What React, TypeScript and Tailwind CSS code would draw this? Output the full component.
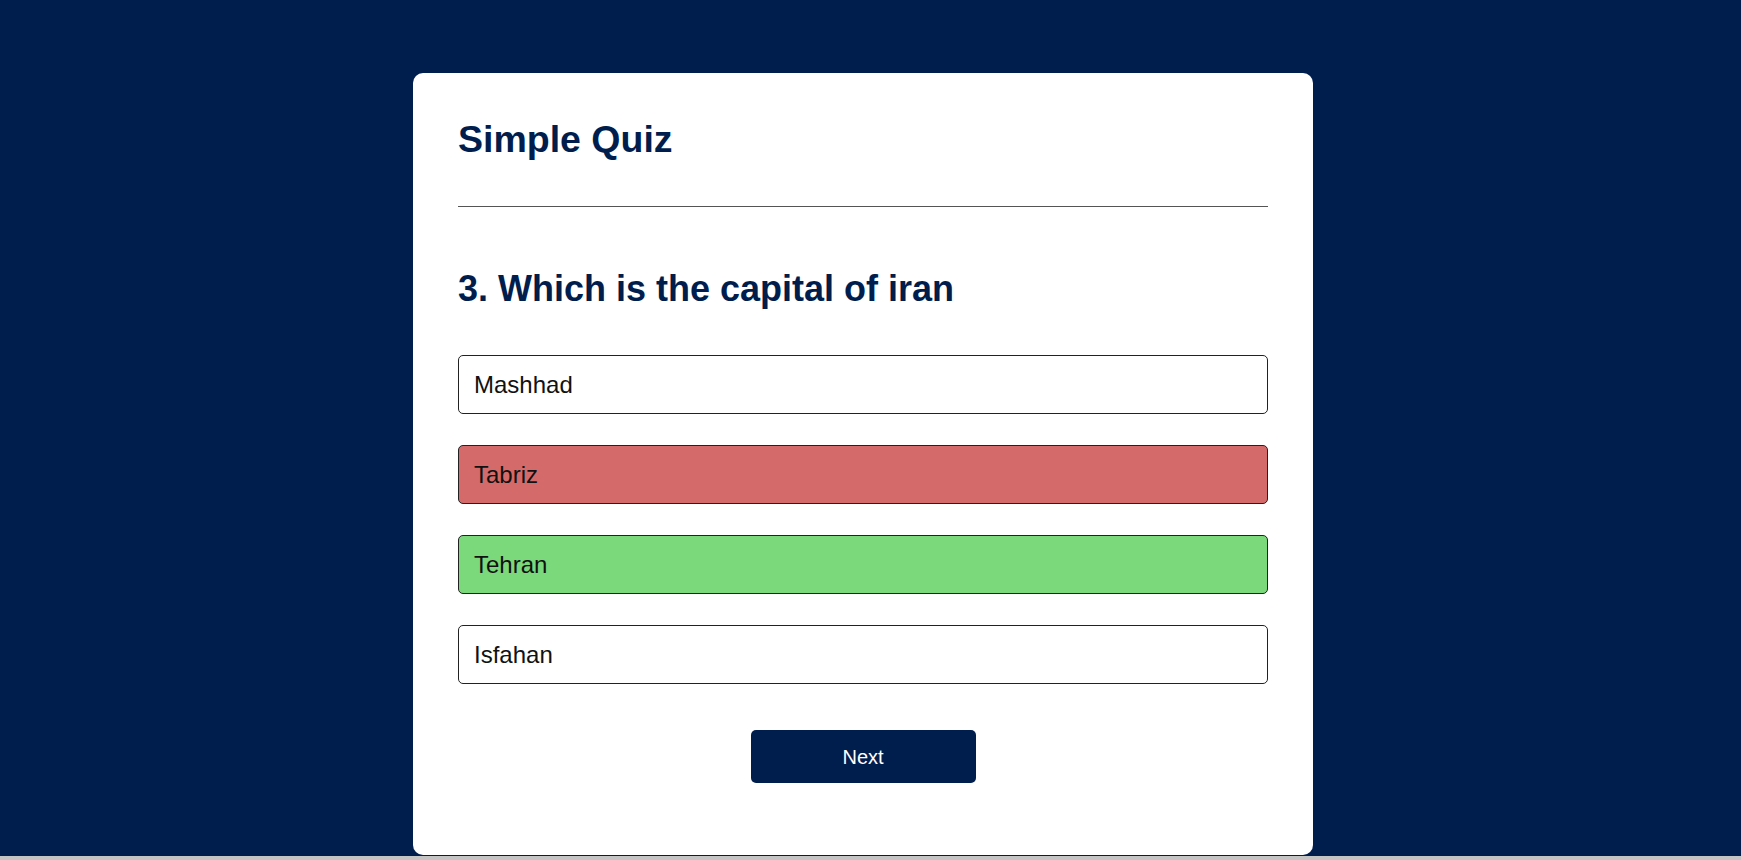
import React from "react";

const options = [
  { label: "Mashhad", cls: "bg-white" },
  { label: "Tabriz", cls: "bg-[#d46a6a]" },
  { label: "Tehran", cls: "bg-[#7bd87b]" },
  { label: "Isfahan", cls: "bg-white" },
];

export default function App() {
  return (
    <div
      className="h-[860px] flex flex-col bg-[#001e4d] overflow-hidden"
      style={{ fontFamily: '"Liberation Sans", Arial, sans-serif' }}
    >
      <div className="flex-1 flex justify-center pr-[15px] pt-[73px]">
        <div className="w-[900px] h-[782px] bg-white rounded-[10px] px-[45px] pt-[45px] flex flex-col">
          <h1 className="text-[37.5px] leading-[42px] font-bold text-[#001e4d]">Simple Quiz</h1>
          <div className="mt-[46px] border-t border-[#555]" />
          <h2 className="mt-[61px] text-[36px] leading-[41px] font-bold text-[#001e4d]">
            3. Which is the capital of iran
          </h2>
          <div className="mt-[46px] flex flex-col gap-[31px]">
            {options.map((o) => (
              <button
                key={o.label}
                className={`h-[59px] w-full text-left px-[15px] text-[24px] text-[#111] border border-[#222] rounded-[5px] ${o.cls}`}
              >
                {o.label}
              </button>
            ))}
          </div>
          <div className="mt-[46px] flex justify-center">
            <button className="w-[225px] h-[53px] rounded-[5px] bg-[#001e4d] text-white text-[20px]">
              Next
            </button>
          </div>
        </div>
      </div>
      <div className="h-[4px] bg-[#c4c4c4]" />
    </div>
  );
}
